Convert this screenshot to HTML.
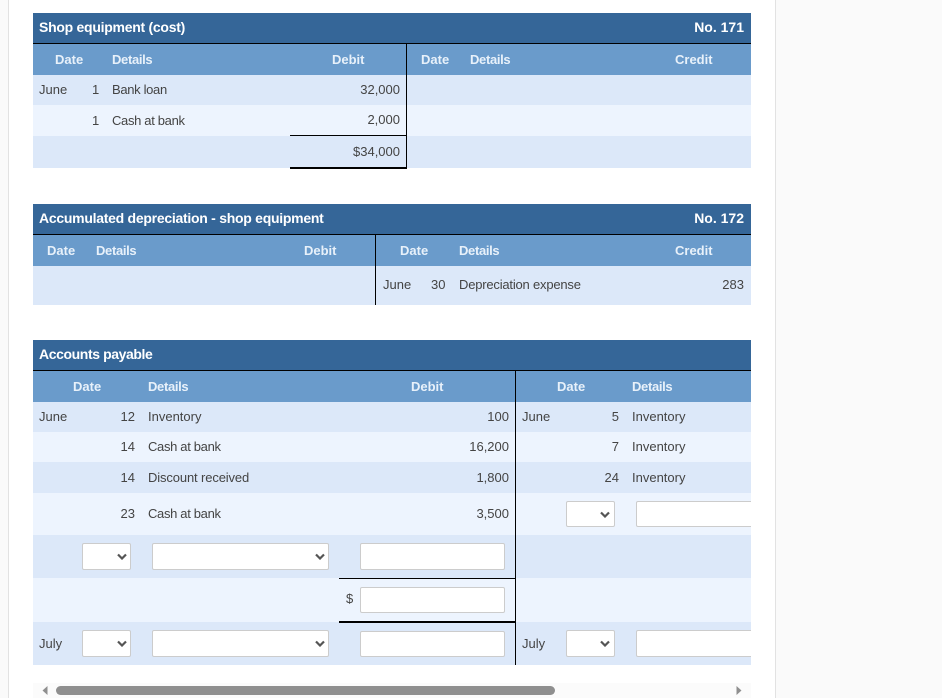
<!DOCTYPE html>
<html><head><meta charset="utf-8"><style>
html,body{margin:0;padding:0;width:942px;height:698px;overflow:hidden;background:#fff}
body{position:relative;font-family:"Liberation Sans",sans-serif;font-size:13px;color:#444}
div{position:absolute}
.t{line-height:16px;white-space:nowrap;margin-top:1px}
.h{font-weight:bold;color:#fff;font-size:14px;letter-spacing:-.27px;margin-top:0}
.s{font-weight:bold;color:#e8f1fa}
.c{letter-spacing:-.33px}
.n{background:#356698}.m{background:#6a9bcb}.d{background:#dce8f9}.l{background:#edf4fe}.k{background:#000}
.i{background:#fff;border:1px solid #ccc;box-sizing:border-box;border-radius:2px}
.i svg{position:absolute;right:3px;top:9px}
.r svg{right:4px}
</style></head><body>
<div style="left:0;top:0;width:8px;height:698px;background:#fafafa"></div>
<div style="left:8px;top:0;width:1px;height:698px;background:#e2e2e2"></div>
<div style="left:775px;top:0;width:1px;height:698px;background:#e2e2e2"></div>
<div style="left:776px;top:0;width:166px;height:698px;background:#fafafa"></div>

<!-- table 1 -->
<div class="n" style="left:33px;top:13px;width:718px;height:30px"></div>
<div class="k" style="left:33px;top:43px;width:718px;height:1px"></div>
<div class="m" style="left:33px;top:44px;width:718px;height:31px"></div>
<div class="d" style="left:33px;top:75px;width:718px;height:30px"></div>
<div class="l" style="left:33px;top:105px;width:718px;height:31px"></div>
<div class="d" style="left:33px;top:136px;width:718px;height:32px"></div>
<div class="k" style="left:406px;top:43px;width:1px;height:125px"></div>
<div class="k" style="left:290px;top:135px;width:116px;height:1px"></div>
<div class="k" style="left:290px;top:167px;width:117px;height:2px"></div>
<div class="t h" style="left:39px;top:19px">Shop equipment (cost)</div>
<div class="t h" style="right:198px;top:19px;letter-spacing:0">No. 171</div>
<div class="t s" style="left:55px;top:51px">Date</div>
<div class="t s c" style="left:112px;top:51px">Details</div>
<div class="t s" style="left:332px;top:51px">Debit</div>
<div class="t s" style="left:421px;top:51px">Date</div>
<div class="t s c" style="left:470px;top:51px">Details</div>
<div class="t s" style="left:675px;top:51px">Credit</div>
<div class="t" style="left:39px;top:81px">June</div>
<div class="t" style="left:92px;top:81px">1</div>
<div class="t c" style="left:112px;top:81px">Bank loan</div>
<div class="t" style="right:542px;top:81px">32,000</div>
<div class="t" style="left:92px;top:112px">1</div>
<div class="t c" style="left:112px;top:112px">Cash at bank</div>
<div class="t" style="right:542px;top:111px">2,000</div>
<div class="t" style="right:542px;top:143px">$34,000</div>

<!-- table 2 -->
<div class="n" style="left:33px;top:204px;width:718px;height:30px"></div>
<div class="k" style="left:33px;top:234px;width:718px;height:1px"></div>
<div class="m" style="left:33px;top:235px;width:718px;height:31px"></div>
<div class="d" style="left:33px;top:266px;width:718px;height:39px"></div>
<div class="k" style="left:375px;top:234px;width:1px;height:71px"></div>
<div class="t h" style="left:39px;top:210px">Accumulated depreciation - shop equipment</div>
<div class="t h" style="right:198px;top:210px;letter-spacing:0">No. 172</div>
<div class="t s" style="left:47px;top:242px">Date</div>
<div class="t s c" style="left:96px;top:242px">Details</div>
<div class="t s" style="left:304px;top:242px">Debit</div>
<div class="t s" style="left:400px;top:242px">Date</div>
<div class="t s c" style="left:459px;top:242px">Details</div>
<div class="t s" style="left:675px;top:242px">Credit</div>
<div class="t" style="left:383px;top:276px">June</div>
<div class="t" style="left:431px;top:276px">30</div>
<div class="t" style="left:459px;top:276px;letter-spacing:-.2px">Depreciation expense</div>
<div class="t" style="right:198px;top:276px">283</div>

<!-- table 3 -->
<div class="n" style="left:33px;top:340px;width:718px;height:30px"></div>
<div class="k" style="left:33px;top:370px;width:718px;height:1px"></div>
<div class="m" style="left:33px;top:371px;width:718px;height:31px"></div>
<div class="d" style="left:33px;top:402px;width:718px;height:30px"></div>
<div class="l" style="left:33px;top:432px;width:718px;height:30px"></div>
<div class="d" style="left:33px;top:462px;width:718px;height:31px"></div>
<div class="l" style="left:33px;top:493px;width:718px;height:42px"></div>
<div class="d" style="left:33px;top:535px;width:718px;height:43px"></div>
<div class="l" style="left:33px;top:578px;width:718px;height:44px"></div>
<div class="d" style="left:33px;top:622px;width:718px;height:43px"></div>
<div class="k" style="left:515px;top:370px;width:1px;height:295px"></div>
<div class="k" style="left:339px;top:578px;width:176px;height:1px"></div>
<div class="k" style="left:339px;top:621px;width:177px;height:2px"></div>
<div class="t h" style="left:39px;top:346px;letter-spacing:-.4px">Accounts payable</div>
<div class="t s" style="left:73px;top:378px">Date</div>
<div class="t s c" style="left:148px;top:378px">Details</div>
<div class="t s" style="left:411px;top:378px">Debit</div>
<div class="t s" style="left:557px;top:378px">Date</div>
<div class="t s c" style="left:632px;top:378px">Details</div>

<div class="t" style="left:39px;top:408px">June</div>
<div class="t" style="right:807px;top:408px">12</div>
<div class="t" style="left:148px;top:408px">Inventory</div>
<div class="t" style="right:433px;top:408px">100</div>
<div class="t" style="left:522px;top:408px">June</div>
<div class="t" style="right:323px;top:408px">5</div>
<div class="t" style="left:632px;top:408px">Inventory</div>

<div class="t" style="right:807px;top:438px">14</div>
<div class="t c" style="left:148px;top:438px">Cash at bank</div>
<div class="t" style="right:433px;top:438px">16,200</div>
<div class="t" style="right:323px;top:438px">7</div>
<div class="t" style="left:632px;top:438px">Inventory</div>

<div class="t" style="right:807px;top:469px">14</div>
<div class="t" style="left:148px;top:469px;letter-spacing:-.13px">Discount received</div>
<div class="t" style="right:433px;top:469px">1,800</div>
<div class="t" style="right:323px;top:469px">24</div>
<div class="t" style="left:632px;top:469px">Inventory</div>

<div class="t" style="right:807px;top:505px">23</div>
<div class="t c" style="left:148px;top:505px">Cash at bank</div>
<div class="t" style="right:433px;top:505px">3,500</div>

<!-- right controls row 4 -->
<div class="i r" style="left:566px;top:501px;width:49px;height:26px"><svg width="10" height="7" viewBox="0 0 10 7"><path d="M1 1.5L5 5.5L9 1.5" fill="none" stroke="#555" stroke-width="2.2"/></svg></div>
<div class="i" style="left:636px;top:501px;width:125px;height:26px"></div>

<!-- row 5 -->
<div class="i" style="left:82px;top:543px;width:49px;height:27px"><svg width="10" height="7" viewBox="0 0 10 7"><path d="M1 1.5L5 5.5L9 1.5" fill="none" stroke="#555" stroke-width="2.2"/></svg></div>
<div class="i" style="left:152px;top:543px;width:177px;height:27px"><svg width="10" height="7" viewBox="0 0 10 7"><path d="M1 1.5L5 5.5L9 1.5" fill="none" stroke="#555" stroke-width="2.2"/></svg></div>
<div class="i" style="left:360px;top:543px;width:145px;height:27px"></div>

<!-- row 6 -->
<div class="t" style="left:346px;top:590px">$</div>
<div class="i" style="left:360px;top:587px;width:145px;height:26px"></div>

<!-- row 7 -->
<div class="t" style="left:39px;top:635px">July</div>
<div class="i" style="left:82px;top:630px;width:49px;height:27px"><svg width="10" height="7" viewBox="0 0 10 7"><path d="M1 1.5L5 5.5L9 1.5" fill="none" stroke="#555" stroke-width="2.2"/></svg></div>
<div class="i" style="left:152px;top:630px;width:177px;height:27px"><svg width="10" height="7" viewBox="0 0 10 7"><path d="M1 1.5L5 5.5L9 1.5" fill="none" stroke="#555" stroke-width="2.2"/></svg></div>
<div class="i" style="left:360px;top:631px;width:145px;height:26px"></div>
<div class="t" style="left:522px;top:635px">July</div>
<div class="i r" style="left:566px;top:630px;width:49px;height:27px"><svg width="10" height="7" viewBox="0 0 10 7"><path d="M1 1.5L5 5.5L9 1.5" fill="none" stroke="#555" stroke-width="2.2"/></svg></div>
<div class="i" style="left:636px;top:630px;width:125px;height:27px"></div>

<!-- clip right overflow -->
<div style="left:751px;top:490px;width:24px;height:175px;background:#fff"></div>

<!-- scrollbar -->
<div style="left:33px;top:683px;width:718px;height:15px;background:#fbfbfb"></div>
<div style="left:56px;top:686px;width:499px;height:9px;background:#8f8f8f;border-radius:5px"></div>
<svg style="position:absolute;left:41px;top:685px" width="8" height="11" viewBox="0 0 8 11"><path d="M6.5 1V10L1.5 5.5Z" fill="#8f8f8f"/></svg>
<svg style="position:absolute;left:735px;top:685px" width="8" height="11" viewBox="0 0 8 11"><path d="M1.5 1V10L6.5 5.5Z" fill="#8f8f8f"/></svg>
</body></html>
